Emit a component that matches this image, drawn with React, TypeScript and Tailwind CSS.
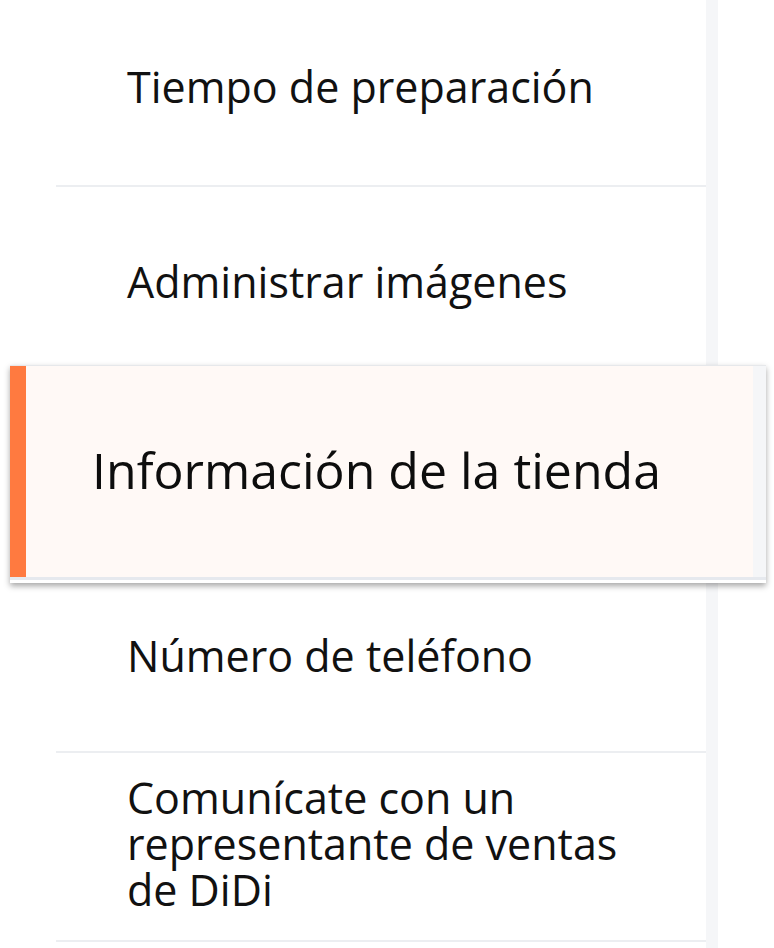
const font = { fontFamily: '"Open Sans", "Noto Sans", "Liberation Sans", sans-serif' }

function Row({ children, className }: { children: React.ReactNode; className: string }) {
  return (
    <div className={`ml-[56px] border-b-2 border-[#eceef1] pl-[71px] text-[43px] leading-[46px] text-[#111] ${className}`}>
      {children}
    </div>
  )
}

export default function App() {
  return (
    <div className="flex h-[948px] w-[774px] overflow-hidden bg-white" style={font}>
      <div className="w-[706px] shrink-0">
        <Row className="h-[187px] pt-[64px]">Tiempo de preparación</Row>
        <div className="ml-[56px] h-[178px] pl-[71px] pt-[72px] text-[43px] leading-[46px] text-[#111]">
          Administrar imágenes
        </div>

        <div className="relative z-10 ml-[10px] w-[756px] border-t border-[#e6e8eb] shadow-[0_3px_6px_rgba(0,0,0,0.35)]">
          <div className="flex h-[211px]">
            <div className="w-[16px] bg-[#ff7a40]" />
            <div className="flex-1 bg-[#fff9f6] pl-[66px] pt-[78px] text-[50px] leading-[52px] text-[#0d0d0d]">
              Información de la tienda
            </div>
            <div className="w-[13px] bg-[#f5f6f8]" />
          </div>
          <div className="h-[3px] bg-[#e6e9ee]" />
          <div className="h-[3px] bg-white" />
        </div>

        <Row className="h-[170px] pt-[50px]">Número de teléfono</Row>
        <Row className="h-[189px] pt-[22px]">
          Comunícate con un
          <br />
          representante de ventas
          <br />
          de DiDi
        </Row>
      </div>
      <div className="h-full w-[12px] shrink-0 bg-[#f5f6f8]" />
      <div className="flex-1 bg-white" />
    </div>
  )
}
